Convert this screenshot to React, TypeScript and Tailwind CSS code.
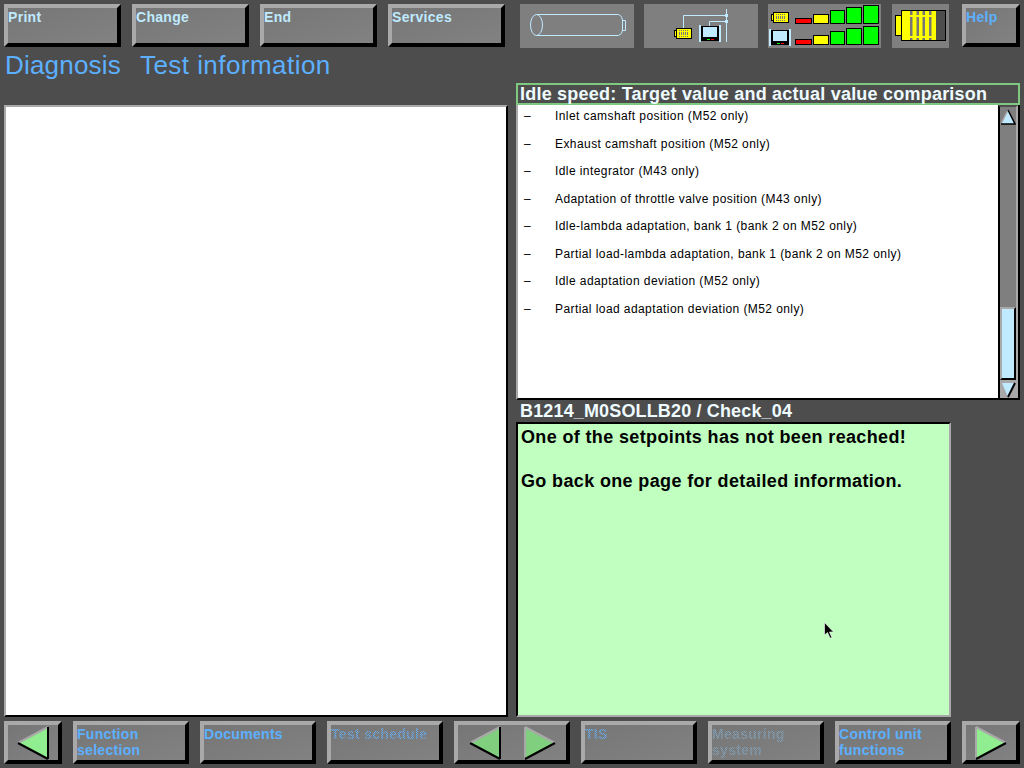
import React from 'react';

const sans = { fontFamily: '"Liberation Sans", Arial, sans-serif' };

const listRows = [
  'Inlet camshaft position (M52 only)',
  'Exhaust camshaft position (M52 only)',
  'Idle integrator (M43 only)',
  'Adaptation of throttle valve position (M43 only)',
  'Idle-lambda adaptation, bank 1 (bank 2 on M52 only)',
  'Partial load-lambda adaptation, bank 1 (bank 2 on M52 only)',
  'Idle adaptation deviation (M52 only)',
  'Partial load adaptation deviation (M52 only)',
];

const BEVEL =
  'border-4 border-t-[#a9a9a9] border-l-[#a9a9a9] border-r-black border-b-black bg-linear-to-br from-[#767676] to-[#828282]';

function Btn({
  label,
  width = 'w-[117px]',
  color = 'text-[#5cb0ff]',
  stipple,
}: {
  label: string;
  width?: string;
  color?: string;
  stipple?: 'bright' | 'dim';
}) {
  const dots =
    stipple === 'dim'
      ? 'inline-block bg-[conic-gradient(#7ea6c4_25%,#808080_0_50%,#7ea6c4_0_75%,#808080_0)] bg-[length:2px_2px] bg-clip-text text-transparent'
      : 'inline-block bg-[conic-gradient(#5cb0ff_25%,#808080_0_50%,#5cb0ff_0_75%,#808080_0)] bg-[length:2px_2px] bg-clip-text text-transparent';
  return (
    <div className={`${BEVEL} ${width} h-[43px] shrink-0 overflow-hidden`}>
      <div className={`whitespace-pre-line text-[14px] font-bold leading-[16px] tracking-[0.3px] pt-[1px] ${color}`}>
        {stipple ? <span className={dots}>{label}</span> : label}
      </div>
    </div>
  );
}

function Arrow({ dir, fill }: { dir: 'left' | 'right'; fill: string }) {
  return (
    <svg width="32" height="34" viewBox="0 0 32 34" className="block">
      {dir === 'left' ? (
        <>
          <polygon points="1,17 31,1 31,33" fill={fill} />
          <line x1="1" y1="17" x2="31" y2="1" stroke="#a9a9a9" strokeWidth="2" />
          <line x1="1" y1="17" x2="31" y2="33" stroke="#000" strokeWidth="2" />
          <line x1="31" y1="1" x2="31" y2="33" stroke="#000" strokeWidth="2" />
        </>
      ) : (
        <>
          <polygon points="1,1 31,17 1,33" fill={fill} />
          <line x1="1" y1="1" x2="31" y2="17" stroke="#a9a9a9" strokeWidth="2" />
          <line x1="1" y1="1" x2="1" y2="33" stroke="#a9a9a9" strokeWidth="2" />
          <line x1="1" y1="33" x2="31" y2="17" stroke="#000" strokeWidth="2" />
        </>
      )}
    </svg>
  );
}

function Plug({ x, y }: { x: number; y: number }) {
  return (
    <g transform={`translate(${x} ${y})`}>
      <rect x="0.5" y="2.5" width="2" height="6" fill="#ff0" stroke="#000" />
      <rect x="2.5" y="0.5" width="15" height="10" fill="#ff0" stroke="#000" />
      {[5, 7, 9, 11, 13].map(s => (
        <line key={s} x1={s + 0.5} y1="2" x2={s + 0.5} y2="9" stroke="#777" />
      ))}
      <line x1="4" y1="3.5" x2="14" y2="3.5" stroke="#ff0" />
      <line x1="4" y1="7.5" x2="14" y2="7.5" stroke="#ff0" />
    </g>
  );
}

function Monitor({ x, y }: { x: number; y: number }) {
  return (
    <g transform={`translate(${x} ${y})`}>
      <rect x="1" y="1" width="20" height="15" fill="#000" />
      <rect x="4" y="2" width="14" height="10" fill="#bfeaff" />
      <rect x="0" y="0" width="2" height="17" fill="#bfeaff" />
      <rect x="20" y="0" width="2" height="17" fill="#bfeaff" />
      <rect x="8" y="14" width="3" height="1" fill="#0f0" />
      <rect x="12" y="14" width="3" height="1" fill="#f00" />
    </g>
  );
}

function Cylinder() {
  return (
    <svg width="114" height="44" viewBox="0 0 114 44" fill="none" stroke="#bfeaff" strokeWidth="1">
      <ellipse cx="16.5" cy="21" rx="6" ry="10.5" />
      <path d="M16.5 10.5H98.5Q102.5 12 102.5 16V26Q102.5 30 98.5 31.5H16.5" />
      <path d="M102.5 16.5H105.5V26.5H102.5" />
    </svg>
  );
}

function Network() {
  return (
    <svg width="114" height="44" viewBox="0 0 114 44" fill="none">
      <path d="M82.5 5V38M39.5 24V11.5H82.5M65.5 22V17.5H82.5" stroke="#bfeaff" />
      <rect x="81" y="10" width="3" height="3" fill="#bfeaff" />
      <rect x="81" y="16" width="3" height="3" fill="#bfeaff" />
      <Plug x={30} y={24} />
      <Monitor x={55} y={21} />
    </svg>
  );
}

function Signal() {
  const bars = [
    { x: 27, w: 17, h: 6, c: '#f00' },
    { x: 45, w: 16, h: 10, c: '#ff0' },
    { x: 62, w: 15, h: 14, c: '#0f0' },
    { x: 78, w: 16, h: 17, c: '#0f0' },
    { x: 95, w: 16, h: 19, c: '#0f0' },
  ];
  return (
    <svg width="113" height="44" viewBox="0 0 113 44">
      <Plug x={3} y={8} />
      <Monitor x={1} y={25} />
      {[20, 41].map(b =>
        bars.map(r => (
          <rect
            key={`${b}-${r.x}`}
            x={r.x + 0.5}
            y={b - r.h + 0.5}
            width={r.w - 1}
            height={r.h - 1}
            fill={r.c}
            stroke="#000"
          />
        )),
      )}
    </svg>
  );
}

function BigPlug() {
  return (
    <svg width="57" height="44" viewBox="0 0 57 44">
      <rect x="3.5" y="11.5" width="6" height="20" fill="#ff0" stroke="#000" />
      <rect x="9.5" y="6.5" width="44" height="30" fill="#4d4d4d" stroke="#000" />
      <rect x="10" y="7" width="34" height="29" fill="#ff0" />
      {[18, 24.5, 30.5, 37].map(s => (
        <g key={s} fill="#777">
          <rect x={s} y="7" width="2.5" height="4" />
          <rect x={s} y="13" width="2.5" height="19" />
          <rect x={s} y="34" width="2.5" height="2" />
        </g>
      ))}
    </svg>
  );
}

function Panel({ width, children }: { width: string; children: React.ReactNode }) {
  return <div className={`${width} h-[44px] bg-[#7f7f7f] shrink-0`}>{children}</div>;
}

export default function App() {
  return (
    <div style={sans} className="relative w-[1024px] h-[768px] bg-[#4d4d4d] flex flex-col overflow-hidden">
      {/* top bar */}
      <div className="flex pt-1 pl-1 h-[48px] shrink-0">
        <div className="flex gap-[11px]">
          <Btn label="Print" color="text-[#bfeaff]" />
          <Btn label="Change" color="text-[#bfeaff]" />
          <Btn label="End" color="text-[#bfeaff]" />
          <Btn label="Services" color="text-[#bfeaff]" />
        </div>
        <div className="flex gap-[10px] ml-[15px]">
          <Panel width="w-[114px]"><Cylinder /></Panel>
          <Panel width="w-[114px]"><Network /></Panel>
          <Panel width="w-[113px]"><Signal /></Panel>
        </div>
        <div className="ml-[11px]">
          <Panel width="w-[57px]"><BigPlug /></Panel>
        </div>
        <div className="ml-[13px]">
          <Btn label="Help" width="w-[58px]" />
        </div>
      </div>

      <div className="flex gap-[19px] pl-[5px] h-[35px] shrink-0 text-[26px] leading-[34px] text-[#5cb0ff]">
        <span className="tracking-[0.2px]">Diagnosis</span>
        <span className="tracking-[0.45px]">Test information</span>
      </div>

      {/* main */}
      <div className="flex h-[634px] pl-1 shrink-0">
        <div className="w-[504px] mt-[22px] bg-white border-2 border-t-[#a9a9a9] border-l-[#a9a9a9] border-r-black border-b-black shrink-0" />
        <div className="ml-[8px] w-[504px] flex flex-col">
          <div className="h-[22px] shrink-0 border-2 border-[#7fc87f] pl-[2px] text-[18px] font-bold leading-[18px] text-[#eefbff] tracking-[0.22px] whitespace-nowrap">
            Idle speed: Target value and actual value comparison
          </div>
          <div className="h-[295px] shrink-0 flex bg-white border-2 border-t-0 border-l-[#a9a9a9] border-r-black border-b-black">
            <div className="flex-1 pl-[6px] pt-[1px] text-[12px] text-black tracking-[0.42px]">
              {listRows.map(row => (
                <div key={row} className="flex h-[27.5px] leading-[20px]">
                  <span className="w-[31px] shrink-0">–</span>
                  <span className="whitespace-nowrap">{row}</span>
                </div>
              ))}
            </div>
            <div className="w-[20px] shrink-0 bg-[#7f7f7f] border-l-2 border-l-black border-t-2 border-t-[#4d4d4d] border-r-2 border-r-[#a9a9a9] flex flex-col">
              <svg width="16" height="20" viewBox="0 0 16 20" className="block shrink-0">
                <polygon points="8,3 15,17 1,17" fill="#bfeaff" />
                <path d="M8 3L1 17" fill="none" stroke="#a9a9a9" strokeWidth="1.5" />
                <path d="M8 3L15 17H1" fill="none" stroke="#000" strokeWidth="1.5" />
              </svg>
              <div className="flex-1 flex flex-col justify-end">
                <div className="h-[73px] bg-[#bfeaff] border-2 border-t-[#a9a9a9] border-l-[#a9a9a9] border-r-black border-b-black" />
              </div>
              <svg width="16" height="18" viewBox="0 0 16 18" className="block shrink-0">
                <rect width="16" height="18" fill="#a9a9a9" />
                <polygon points="2,3 15,3 8,17" fill="#bfeaff" />
                <path d="M15 3L8 17" fill="none" stroke="#000" strokeWidth="2" />
              </svg>
            </div>
          </div>
          <div className="h-[22px] shrink-0 pl-[4px] pt-[1px] text-[18px] font-bold leading-[20px] text-[#eefbff] tracking-[0.15px] whitespace-nowrap">
            B1214_M0SOLLB20 / Check_04
          </div>
          <div className="w-[435px] h-[295px] shrink-0 bg-[#c0ffc0] border-2 border-t-black border-l-black border-r-[#a9a9a9] border-b-[#a9a9a9] pl-[3px] pt-[2px] text-[18px] font-bold leading-[22px] text-black tracking-[0.36px]">
            <div>One of the setpoints has not been reached!</div>
            <div className="mt-[22px]">Go back one page for detailed information.</div>
          </div>
        </div>
      </div>

      {/* bottom bar */}
      <div className="flex gap-[11px] pl-1 pt-[4px]">
        <div className={`${BEVEL} w-[58px] h-[43px] flex items-center justify-center`}>
          <Arrow dir="left" fill="#90ee90" />
        </div>
        <Btn label={'Function\nselection'} width="w-[116px]" />
        <Btn label="Documents" width="w-[116px]" />
        <Btn label="Test schedule" width="w-[116px]" stipple="bright" />
        <div className={`${BEVEL} w-[116px] h-[43px] flex items-center justify-center gap-[23px]`}>
          <Arrow dir="left" fill="#7fcf7f" />
          <Arrow dir="right" fill="#7fcf7f" />
        </div>
        <Btn label="TIS" width="w-[116px]" stipple="bright" />
        <Btn label={'Measuring\nsystem'} width="w-[116px]" stipple="dim" />
        <Btn label={'Control unit\nfunctions'} width="w-[116px]" />
        <div className={`${BEVEL} w-[58px] h-[43px] flex items-center justify-center`}>
          <Arrow dir="right" fill="#90ee90" />
        </div>
      </div>

      {/* mouse pointer */}
      <svg width="12" height="18" viewBox="0 0 12 18" className="absolute left-[824px] top-[622px]">
        <path d="M0.5 0.5V13L3.5 10.5L6 16H8L5.5 10H9.5Z" fill="#000" stroke="#fff" strokeWidth="0.6" />
      </svg>
    </div>
  );
}
